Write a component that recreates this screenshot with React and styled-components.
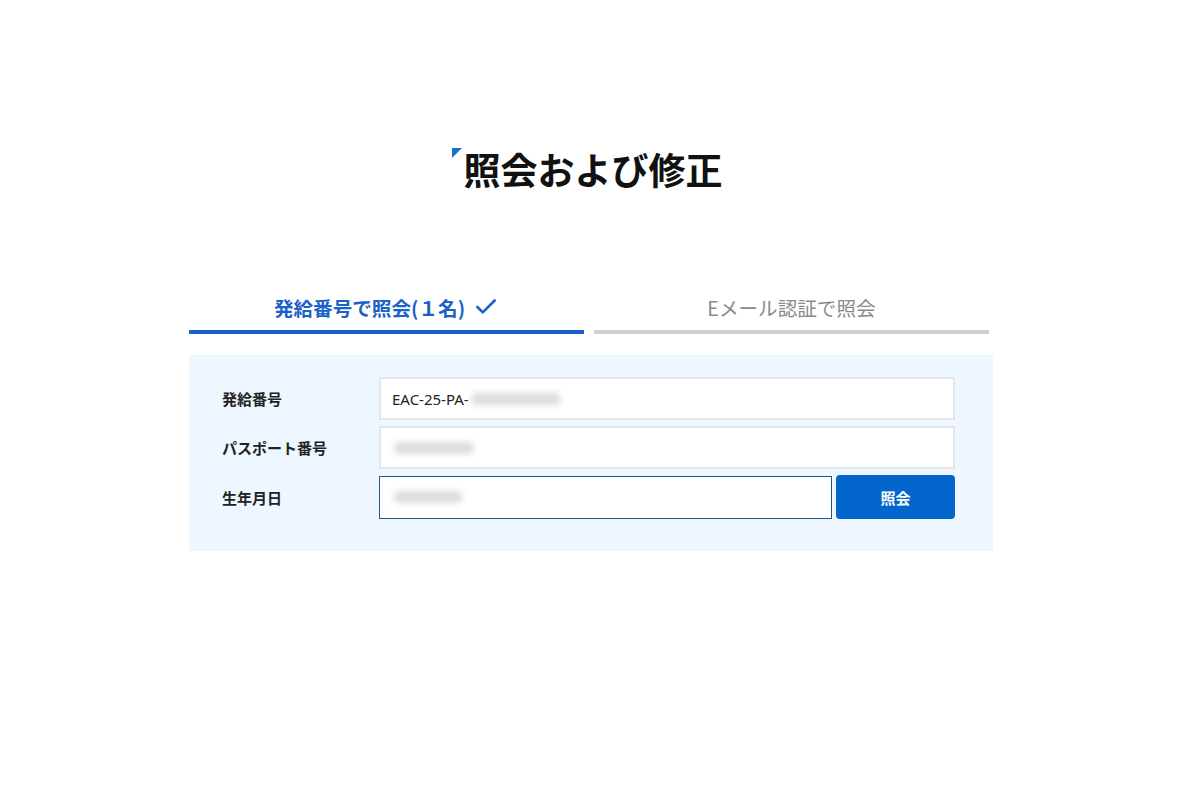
import styled, { createGlobalStyle } from "styled-components";
import { Check } from "lucide-react";

const GlobalStyle = createGlobalStyle`
  body {
    margin: 0;
    background: #fff;
    font-family: "Noto Sans CJK JP", "Noto Sans", sans-serif;
    color: #111;
  }
`;

export default function App() {
  return (
    <>
      <GlobalStyle />
      <Page>
        <Container>
          <TitleRow>
            <Title>照会および修正</Title>
          </TitleRow>

          <Tabs>
            <Tab $active>
              発給番号で照会(１名)
              <Check size={26} strokeWidth={2.4} />
            </Tab>
            <Tab>Eメール認証で照会</Tab>
          </Tabs>

          <Panel>
            <Row>
              <Label>発給番号</Label>
              <Field>
                EAC-25-PA-<Blur $w={90} />
              </Field>
            </Row>
            <Row>
              <Label>パスポート番号</Label>
              <Field>
                <Blur $w={80} />
              </Field>
            </Row>
            <Row>
              <Label>生年月日</Label>
              <Field $focused>
                <Blur $w={70} />
              </Field>
              <SearchButton>照会</SearchButton>
            </Row>
          </Panel>
        </Container>
      </Page>
    </>
  );
}

const Page = styled.div`
  padding: 146px 0 0 189px;
`;

const Container = styled.div`
  width: 804px;
`;

const TitleRow = styled.div`
  display: flex;
  justify-content: center;
  padding-right: 8px;
`;

const Title = styled.h1`
  position: relative;
  margin: 0;
  padding-left: 12px;
  font-size: 37px;
  line-height: 47px;
  font-weight: 700;

  &::before {
    content: "";
    position: absolute;
    left: 0;
    top: 2px;
    border-top: 10px solid #1a6fd6;
    border-right: 10px solid transparent;
  }
`;

const Tabs = styled.div`
  display: flex;
  gap: 10px;
  width: 800px;
  margin-top: 101px;
`;

const Tab = styled.div`
  flex: 1;
  display: flex;
  align-items: center;
  justify-content: center;
  gap: 8px;
  padding-bottom: 10px;
  height: 26px;
  font-size: 19.6px;
  font-weight: ${(p) => (p.$active ? 700 : 400)};
  color: ${(p) => (p.$active ? "#1a62c9" : "#8a8a8a")};
  border-bottom: 4px solid ${(p) => (p.$active ? "#1a62c9" : "#d0d0d0")};
`;

const Panel = styled.div`
  margin-top: 21px;
  background: #eef6ff;
  padding: 22px 38px 32px 33px;
  display: flex;
  flex-direction: column;
  gap: 6px;
`;

const Row = styled.div`
  display: flex;
  align-items: center;
  gap: 4px;
`;

const Label = styled.div`
  width: 153px;
  flex-shrink: 0;
  font-size: 15px;
  font-weight: 700;
  color: #222;
`;

const Field = styled.div`
  flex: 1;
  display: flex;
  align-items: center;
  height: 43px;
  box-sizing: border-box;
  padding: 0 11px;
  background: #fff;
  border: ${(p) => (p.$focused ? "1.5px solid #2d5288" : "2px solid #e3e6ea")};
  font-family: "Noto Sans", "Noto Sans CJK JP", sans-serif;
  font-size: 15px;
  color: #222;
`;

const Blur = styled.span`
  display: inline-block;
  width: ${(p) => p.$w}px;
  height: 12px;
  margin-left: 2px;
  border-radius: 6px;
  background: #dcdcdc;
  filter: blur(3px);
`;

const SearchButton = styled.button`
  width: 119px;
  height: 44px;
  flex-shrink: 0;
  border: none;
  border-radius: 4px;
  background: #0266cc;
  color: #fff;
  font-family: "Noto Sans CJK JP", sans-serif;
  font-size: 15px;
  font-weight: 700;
`;
